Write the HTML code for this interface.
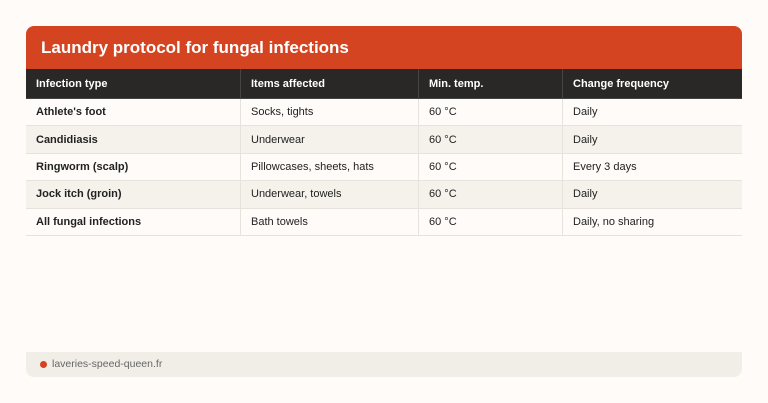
<!DOCTYPE html>
<html><head><style>
body{margin:0;width:768px;height:403px;background:#fefbf8;font-family:"Liberation Sans",sans-serif;position:relative;overflow:hidden}
.hd{position:absolute;left:26px;top:26px;width:716px;height:43px;background:#d54421;border-radius:8px 8px 0 0;color:#fff;font-weight:bold;font-size:17px;line-height:43px;box-sizing:border-box;padding-left:15px}
table{position:absolute;left:26px;top:69px;width:716px;border-collapse:collapse;font-size:11px;color:#222;table-layout:fixed}
td,th{height:26.4px;padding:0 0 0 10px;text-align:left;border-right:1px solid #e6e2dc;border-bottom:1px solid #e6e2dc}
td:last-child,th:last-child{border-right:none}
th{background:#2a2826;color:#fff;font-weight:bold;height:28px;border-color:#444;padding-top:1px}
tr:nth-child(odd) td{background:#f5f2ec}
td:first-child{font-weight:bold}
.ft{position:absolute;left:26px;top:352px;width:716px;height:25px;background:#f1eee8;border-radius:0 0 8px 8px;font-size:10.5px;color:#666;line-height:25px;padding-left:26px;box-sizing:border-box}
.ft:before{content:"";position:absolute;left:14px;top:9px;width:7px;height:7px;border-radius:50%;background:#d54421}
</style></head><body>
<div class="hd">Laundry protocol for fungal infections</div>
<table>
<tr><th style="width:204px">Infection type</th><th style="width:167px">Items affected</th><th style="width:133px">Min. temp.</th><th>Change frequency</th></tr>
<tr><td>Athlete's foot</td><td>Socks, tights</td><td>60 °C</td><td>Daily</td></tr>
<tr><td>Candidiasis</td><td>Underwear</td><td>60 °C</td><td>Daily</td></tr>
<tr><td>Ringworm (scalp)</td><td>Pillowcases, sheets, hats</td><td>60 °C</td><td>Every 3 days</td></tr>
<tr><td>Jock itch (groin)</td><td>Underwear, towels</td><td>60 °C</td><td>Daily</td></tr>
<tr><td>All fungal infections</td><td>Bath towels</td><td>60 °C</td><td>Daily, no sharing</td></tr>
</table>
<div class="ft">laveries-speed-queen.fr</div>
</body></html>
